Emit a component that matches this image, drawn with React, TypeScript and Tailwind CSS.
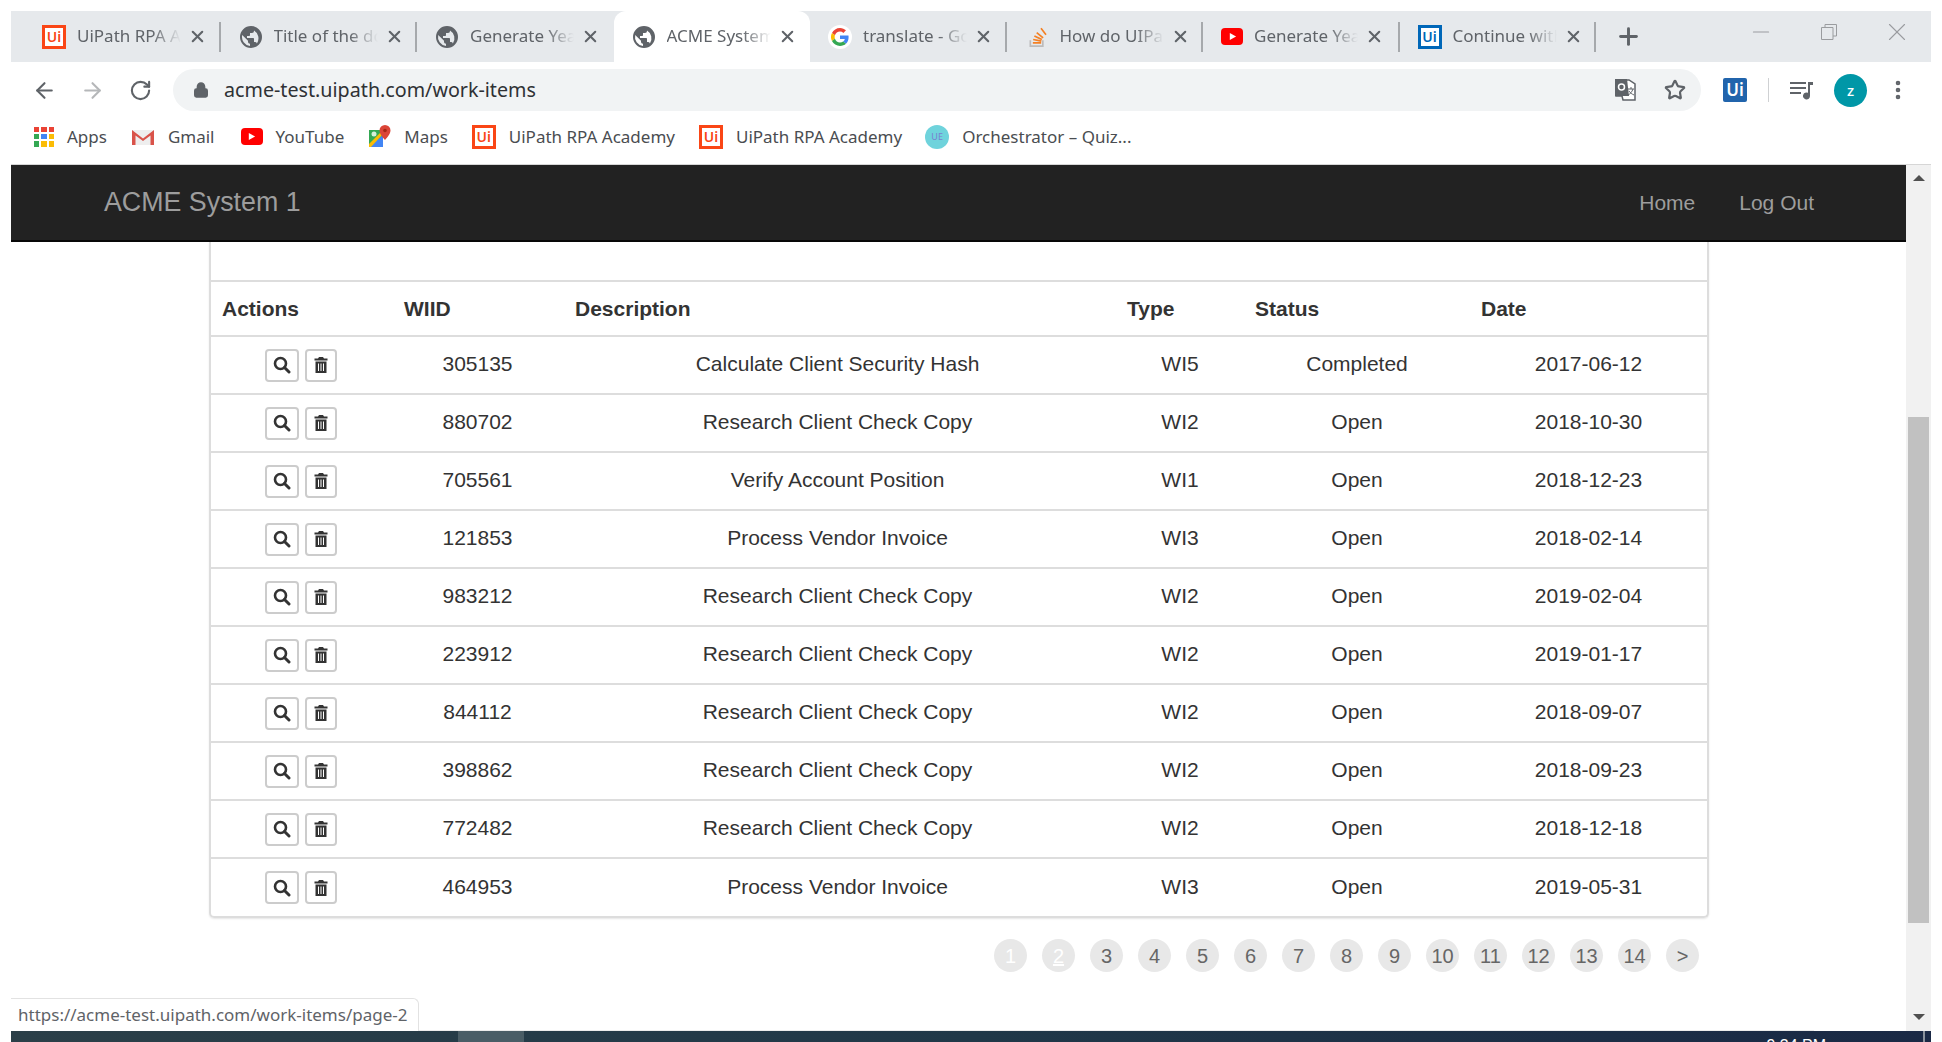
import { ArrowLeft, ArrowRight, RotateCw, Lock, Star, Plus, X, Minus, MoreVertical } from 'lucide-react';

const uiFont = "font-['Noto_Sans','Open_Sans',sans-serif]";

const filas = [
  ['305135', 'Calculate Client Security Hash', 'WI5', 'Completed', '2017-06-12'],
  ['880702', 'Research Client Check Copy', 'WI2', 'Open', '2018-10-30'],
  ['705561', 'Verify Account Position', 'WI1', 'Open', '2018-12-23'],
  ['121853', 'Process Vendor Invoice', 'WI3', 'Open', '2018-02-14'],
  ['983212', 'Research Client Check Copy', 'WI2', 'Open', '2019-02-04'],
  ['223912', 'Research Client Check Copy', 'WI2', 'Open', '2019-01-17'],
  ['844112', 'Research Client Check Copy', 'WI2', 'Open', '2018-09-07'],
  ['398862', 'Research Client Check Copy', 'WI2', 'Open', '2018-09-23'],
  ['772482', 'Research Client Check Copy', 'WI2', 'Open', '2018-12-18'],
  ['464953', 'Process Vendor Invoice', 'WI3', 'Open', '2019-05-31'],
];

const paginas = ['1', '2', '3', '4', '5', '6', '7', '8', '9', '10', '11', '12', '13', '14', '>'];

function UiLogo({ blue = false }: { blue?: boolean }) {
  const color = blue ? 'border-[#0067b8] text-[#0067b8]' : 'border-[#fa4616] text-[#fa4616]';
  return (
    <span className={`flex h-6 w-6 shrink-0 items-center justify-center border-[3px] bg-white text-[14px] leading-none font-semibold ${color}`}>
      Ui
    </span>
  );
}

function Globe() {
  return (
    <svg viewBox="0 0 24 24" className="h-6 w-6 shrink-0" fill="#5f6368">
      <path d="M12 1a11 11 0 1 0 0 22 11 11 0 0 0 0-22Zm-1 19.9A9 9 0 0 1 3.2 10l5.8 5.8v1c0 1.1.9 2 2 2v2.1Zm6.9-2.5A2 2 0 0 0 16 17h-1v-3c0-.6-.4-1-1-1H8v-2h2c.6 0 1-.4 1-1V8h2a2 2 0 0 0 2-2v-.4a9 9 0 0 1 2.9 12.8Z" />
    </svg>
  );
}

function GoogleG() {
  return (
    <span className="flex h-6 w-6 shrink-0 items-center justify-center rounded-full bg-white">
      <svg viewBox="0 0 48 48" className="h-[18px] w-[18px]">
        <path fill="#EA4335" d="M24 9.5c3.5 0 6.6 1.2 9.1 3.6l6.8-6.8C35.8 2.5 30.4 0 24 0 14.6 0 6.5 5.4 2.6 13.2l7.9 6.2C12.4 13.7 17.7 9.5 24 9.5Z" />
        <path fill="#4285F4" d="M46.9 24.5c0-1.6-.1-3.1-.4-4.5H24v9h12.9c-.6 3-2.2 5.5-4.8 7.2l7.7 6c4.5-4.2 7.1-10.3 7.1-17.7Z" />
        <path fill="#FBBC05" d="M10.5 28.6a14.5 14.5 0 0 1 0-9.2l-7.9-6.2a24 24 0 0 0 0 21.6l7.9-6.2Z" />
        <path fill="#34A853" d="M24 48c6.5 0 11.9-2.1 15.9-5.8l-7.7-6c-2.2 1.4-4.9 2.3-8.2 2.3-6.3 0-11.6-4.2-13.5-9.9l-7.9 6.2C6.5 42.6 14.6 48 24 48Z" />
      </svg>
    </span>
  );
}

function StackIcon() {
  return (
    <span className="flex w-6 shrink-0 justify-center">
      <svg viewBox="0 0 24 28" className="h-[24px] w-[20px]">
        <path d="M3 18v8h17v-8h-2v6H5v-6Z" fill="#bcbbbb" />
        <path d="M7 22h10v-2H7Zm.2-4 9.8 2 .4-2-9.8-2Zm1.2-4.4 9 4.2.9-1.8-9-4.2Zm2.6-4.2 7.7 6.4 1.3-1.5-7.7-6.4ZM16 4l6 8 1.6-1.2-6-8Z" fill="#f48024" />
      </svg>
    </span>
  );
}

function YouTubeIcon() {
  return (
    <span className="flex h-[17px] w-[22px] shrink-0 items-center justify-center rounded-[4px] bg-[#f00]">
      <svg viewBox="0 0 10 10" className="h-[9px] w-[9px]">
        <path d="M2 1l7 4-7 4Z" fill="#fff" />
      </svg>
    </span>
  );
}

function GmailIcon() {
  return (
    <svg viewBox="0 0 24 18" className="h-[18px] w-6 shrink-0">
      <path d="M1 2h22v15H1Z" fill="#eeeeee" />
      <path d="M1 17V2l11 8.5L23 2v15h-3.5V7.5L12 13 4.5 7.5V17Z" fill="#d9534a" />
    </svg>
  );
}

function MapsIcon() {
  return (
    <svg viewBox="0 0 24 24" className="h-6 w-6 shrink-0">
      <path d="M2 5h14v17H2Z" fill="#34a853" />
      <path d="M2 22 16 10v12Z" fill="#4285f4" />
      <path d="M2 19 14 7l2 2L4 22H2Z" fill="#fbbc05" />
      <circle cx="7" cy="9" r="2.5" fill="#d6efd9" />
      <path d="M18 0a5.5 5.5 0 0 0-5.5 5.5C12.500 9.500 18 15 18 15s5.500-5.500 5.500-9.500A5.500 5.500 0 0 0 18 0Z" fill="#db4437" />
      <circle cx="18" cy="5.500" r="1.800" fill="#a52714" />
    </svg>
  );
}

function AppsIcon() {
  const cores = ['#ea4335', '#ea4335', '#ea4335', '#34a853', '#4285f4', '#fbbc05', '#34a853', '#fbbc05', '#fbbc05'];
  return (
    <span className="grid h-[20px] w-[20px] shrink-0 grid-cols-3 gap-[2px]">
      {cores.map((c, i) => (
        <span key={i} className="block" style={{ backgroundColor: c }} />
      ))}
    </span>
  );
}

function SearchGlyph() {
  return (
    <svg viewBox="0 0 18 18" className="h-[18px] w-[18px]" fill="none" stroke="#333333">
      <circle cx="7.500" cy="7.500" r="5.500" strokeWidth="2.600" />
      <path d="M11.500 11.500 16 16" strokeWidth="3" strokeLinecap="round" />
    </svg>
  );
}

function TrashGlyph() {
  return (
    <svg viewBox="0 0 14 16" className="h-[16px] w-[14px]" fill="#333333">
      <path d="M5 0h4l1 1.500h3.500V3.500H.5V1.500H4Z" />
      <path d="M1.500 4.500h11V16h-11ZM4 6.500V14h1V6.500Zm2.500 0V14h1V6.500Zm2.500 0V14h1V6.500Z" fillRule="evenodd" />
    </svg>
  );
}

function Tab({ icon, titulo, ativo, semBarra }: { icon: React.ReactNode; titulo: string; ativo?: boolean; semBarra?: boolean }) {
  return (
    <div
      className={`relative flex h-full w-[196.5px] shrink-0 items-center pl-[18px] ${
        ativo ? 'rounded-t-[12px] bg-white' : ''
      }`}
    >
      {icon}
      <span className="ml-[11px] w-[104px] overflow-hidden pb-[2px] text-[17px] whitespace-nowrap text-[#5f6368] [mask-image:linear-gradient(to_right,black_72%,transparent_100%)]">
        {titulo}
      </span>
      <X size={19} strokeWidth={2.6} className="ml-[7px] shrink-0 text-[#5f6368]" />
      {!semBarra && <span className="absolute top-[11px] right-0 h-[30px] w-[2px] bg-[#a6a9ac]" />}
    </div>
  );
}

function Bookmark({ icon, texto, className }: { icon: React.ReactNode; texto: string; className: string }) {
  return (
    <div className={`flex items-center gap-[13px] ${className}`}>
      {icon}
      <span className="text-[17px] whitespace-nowrap text-[#4a4d51]">{texto}</span>
    </div>
  );
}

function BrowserChrome() {
  return (
    <div className={`${uiFont} shrink-0`}>
      {/* Abas */}
      <div className="flex h-[51px] items-center bg-[#e6e9ec] pl-[13px]">
        <Tab icon={<UiLogo />} titulo="UiPath RPA Academy" />
        <Tab icon={<Globe />} titulo="Title of the document" />
        <Tab icon={<Globe />} titulo="Generate Year" semBarra />
        <Tab icon={<Globe />} titulo="ACME System 1" ativo semBarra />
        <Tab icon={<GoogleG />} titulo="translate - Google" />
        <Tab icon={<StackIcon />} titulo="How do UIPath" />
        <Tab icon={<YouTubeIcon />} titulo="Generate Year" />
        <Tab icon={<UiLogo blue />} titulo="Continue with" />
        <Plus size={27} strokeWidth={2.6} className="ml-[19px] text-[#5f6368]" />
        <div className="ml-auto flex items-center pr-[19px] pb-[9px] text-[#9a9c9f]">
          <Minus size={26} strokeWidth={1} />
          <svg viewBox="0 0 16 16" className="ml-[47px] h-[16px] w-[16px]" fill="none" stroke="currentColor">
            <path d="M.5 3.500h11.500v12H.5ZM4 3.500V.5h11.500v11.500H12" />
          </svg>
          <X size={30} strokeWidth={0.9} className="ml-[45px]" />
        </div>
      </div>

      {/* Barra de endereço */}
      <div className="flex h-[54px] items-center pt-[2px]">
        <ArrowLeft size={25} strokeWidth={2} className="ml-[21px] text-[#5f6368]" />
        <ArrowRight size={25} strokeWidth={2} className="ml-[23px] text-[#b5b7b9]" />
        <RotateCw size={23} strokeWidth={2.2} className="ml-[24px] text-[#5f6368]" />
        <div className="ml-[21px] flex h-[42px] w-[1528px] items-center rounded-full bg-[#f1f3f4] pr-[15px] pl-[20px]">
          <Lock size={16} strokeWidth={3} className="fill-[#5f6368] text-[#5f6368]" />
          <span className="ml-[15px] text-[19.7px] text-[#2f3134]">acme-test.uipath.com/work-items</span>
          <svg viewBox="0 0 24 24" className="ml-auto h-[24px] w-[24px]">
            <path d="M2 2h13l6 4v16H9l-1-4H2Z" fill="#fff" stroke="#5f6368" strokeWidth="1.500" />
            <path d="M1 1h12l2 17H1Z" fill="#5f6368" />
            <circle cx="7.500" cy="9" r="3" fill="none" stroke="#fff" strokeWidth="1.500" />
            <path d="M14 11h6m-3-2v2m2 0c-1 3-3 5-5 6m1-4c1 2 3 3 5 4" fill="none" stroke="#5f6368" />
          </svg>
          <Star size={22} strokeWidth={2.4} className="ml-[26px] text-[#5f6368]" />
        </div>
        <span className="ml-[22px] flex h-[24px] w-[24px] items-center justify-center rounded-[2px] bg-[#2164ac] text-[17px] font-semibold text-white">
          Ui
        </span>
        <span className="ml-[21px] h-[24px] w-px bg-[#cfd1d3]" />
        <svg viewBox="0 0 24 20" className="ml-[21px] h-[20px] w-[24px]" fill="#5f6368">
          <path d="M0 2h16v2H0Zm0 5h16v2H0Zm0 5h11v2H0Zm18-10h5v3h-3v11a3.500 3.500 0 1 1-2-3.200Z" />
        </svg>
        <span className="ml-[20px] flex h-[33px] w-[33px] items-center justify-center rounded-full bg-[#0097a7] text-[15px] font-medium text-white">
          z
        </span>
        <MoreVertical size={24} strokeWidth={2.6} className="ml-[19px] text-[#5f6368]" />
      </div>

      {/* Favoritos */}
      <div className="flex h-[49px] items-center border-b border-[#d6d6d6] pb-[7px] pl-[23px]">
        <Bookmark icon={<AppsIcon />} texto="Apps" className="" />
        <Bookmark icon={<GmailIcon />} texto="Gmail" className="ml-[24px]" />
        <Bookmark icon={<YouTubeIcon />} texto="YouTube" className="ml-[26px]" />
        <Bookmark icon={<MapsIcon />} texto="Maps" className="ml-[23px]" />
        <Bookmark icon={<UiLogo />} texto="UiPath RPA Academy" className="ml-[24px]" />
        <Bookmark icon={<UiLogo />} texto="UiPath RPA Academy" className="ml-[24px]" />
        <Bookmark
          icon={
            <span className="flex h-6 w-6 items-center justify-center rounded-full bg-[#6fd3dc] text-[9px] text-[#7a7fd0]">UE</span>
          }
          texto="Orchestrator – Quiz..."
          className="ml-[23px]"
        />
      </div>
    </div>
  );
}

function WorkItems() {
  return (
    <div className="min-w-0 flex-1 bg-white">
      <nav className="flex h-[77px] items-center border-b-2 border-[#080808] bg-[#222222] pr-[92px] pl-[93px] text-[#9d9d9d]">
        <span className="text-[26.8px]">ACME System 1</span>
        <span className="ml-auto text-[21px]">Home</span>
        <span className="ml-[44px] text-[21px]">Log Out</span>
      </nav>

      <div className="mr-[197px] ml-[198px] h-[676px] rounded-b-[5px] border-x-2 border-b-2 border-[#dddddd] pt-[38px] shadow-[0_1px_2px_rgba(0,0,0,0.1)]">
        <table className="w-full table-fixed border-t-2 border-[#dddddd] text-[21px] text-[#333333]">
          <colgroup>
            <col className="w-[182px]" />
            <col className="w-[171px]" />
            <col className="w-[552px]" />
            <col className="w-[128px]" />
            <col className="w-[226px]" />
            <col />
          </colgroup>
          <thead>
            <tr className="h-[55px] text-left font-bold">
              <th className="pl-[11px]">Actions</th>
              <th className="pl-[11px]">WIID</th>
              <th className="pl-[11px]">Description</th>
              <th className="pl-[11px]">Type</th>
              <th className="pl-[11px]">Status</th>
              <th className="pl-[11px]">Date</th>
            </tr>
          </thead>
          <tbody>
            {filas.map(f => (
              <tr key={f[0]} className="h-[58px] border-t-2 border-[#dddddd] text-center">
                <td>
                  <div className="flex justify-center gap-[6px] pr-[2px]">
                    <button className="flex h-[33px] w-[34px] items-center justify-center rounded-[4px] border-2 border-[#cccccc]">
                      <SearchGlyph />
                    </button>
                    <button className="flex h-[33px] w-[32px] items-center justify-center rounded-[4px] border-2 border-[#cccccc]">
                      <TrashGlyph />
                    </button>
                  </div>
                </td>
                <td className="pr-[2px] pb-[2px]">{f[0]}</td>
                <td className="pr-[5px] pb-[2px]">{f[1]}</td>
                <td className="pb-[2px]">{f[2]}</td>
                <td className="pb-[2px]">{f[3]}</td>
                <td className="pb-[2px]">{f[4]}</td>
              </tr>
            ))}
          </tbody>
        </table>
      </div>

      <div className="mt-[21px] mr-[207px] flex justify-end gap-[15px]">
        {paginas.map((p, i) => (
          <a
            key={p}
            className={`flex h-[33px] w-[33px] items-center justify-center rounded-full bg-[#e8e8e8] text-[20px] ${
              i < 2 ? 'text-white' : 'text-[#666666]'
            } ${i === 1 ? 'underline' : ''}`}
          >
            {p}
          </a>
        ))}
      </div>
    </div>
  );
}

function Scrollbar() {
  return (
    <div className="flex w-[25px] shrink-0 flex-col items-center bg-[#f1f1f1]">
      <span className="mt-[10px] h-0 w-0 border-x-[6px] border-b-[6px] border-x-transparent border-b-[#505050]" />
      <span className="mt-[236px] h-[506px] w-[21px] bg-[#c1c1c1]" />
      <span className="mt-[91px] h-0 w-0 border-x-[6px] border-t-[6px] border-x-transparent border-t-[#505050]" />
    </div>
  );
}

export default function App() {
  return (
    <div className="relative flex h-screen flex-col overflow-hidden bg-white pt-[11px] font-['Liberation_Sans',Arial,sans-serif]">
      <div className="ml-[11px] w-[1920px]">
        <BrowserChrome />
      </div>
      <div className="ml-[11px] flex h-[866px] w-[1920px] shrink-0">
        <WorkItems />
        <Scrollbar />
      </div>

      {/* Dica de link na parte inferior */}
      <div className="absolute bottom-[11px] left-[11px] h-[33px] w-[1803px] border-b border-[#ececec]">
        <div className={`${uiFont} h-[33px] w-[408px] rounded-tr-[6px] border-t border-r border-[#e2e2e2] bg-white pl-[7px] text-[17px] leading-[31px] text-[#5f6368]`}>
          https://acme-test.uipath.com/work-items/page-2
        </div>
      </div>

      {/* Barra de tarefas cortada */}
      <div className="absolute right-[11px] bottom-0 left-[11px] flex h-[11px] bg-gradient-to-r from-[#2b3f48] via-[#203848] to-[#1a2945] pl-[447px]">
        <span className="h-full w-[66px] bg-[#4a5d66]" />
        <span className="mr-[97px] ml-auto h-full overflow-hidden text-[16px] leading-[30px] text-white">9:34 PM</span>
        <span className="mr-[6px] h-full w-[2px] bg-[#8a929c]" />
      </div>
    </div>
  );
}
